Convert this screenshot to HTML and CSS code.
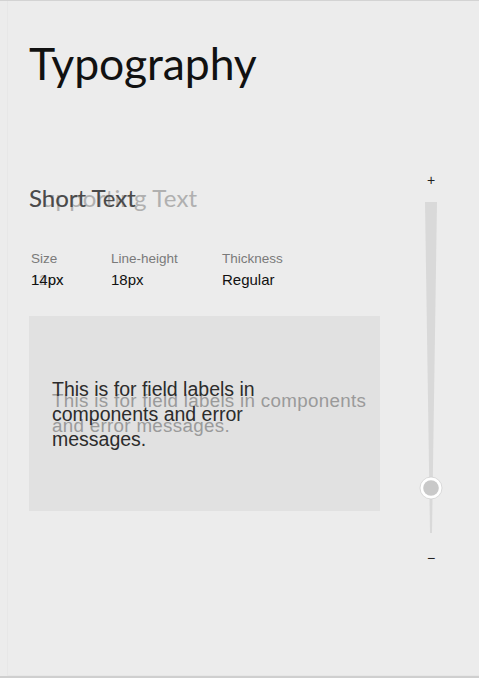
FILE: index.html
```html
<!DOCTYPE html>
<html>
<head>
<meta charset="utf-8">
<link rel="stylesheet" href="styles.css">
</head>
<body>
<div class="page">
  <div class="main">
    <h1 class="title">Typography</h1>
    <div class="stack style-name">
      <span class="name-new">Supporting Text</span>
      <span class="name-old">Short Text</span>
    </div>
    <div class="specs">
      <div class="spec spec-size">
        <div class="spec-label">Size</div>
        <div class="stack">
          <span class="spec-value ghost">12px</span>
          <span class="spec-value">14px</span>
        </div>
      </div>
      <div class="spec spec-lh">
        <div class="spec-label">Line-height</div>
        <div class="spec-value">18px</div>
      </div>
      <div class="spec">
        <div class="spec-label">Thickness</div>
        <div class="spec-value">Regular</div>
      </div>
    </div>
    <div class="sample stack">
      <p class="sample-new">This is for field labels in components and error messages.</p>
      <p class="sample-old">This is for field labels in components and error messages.</p>
    </div>
  </div>
  <div class="slider">
    <span class="slider-sign">+</span>
    <svg class="slider-track" width="30" height="344" viewBox="0 0 30 344">
      <polygon points="9,0 21,0 16,331 14,331" fill="#d9d9d9"/>
      <circle cx="15" cy="286" r="11" fill="#ffffff" stroke="#d0d0d0" stroke-width="0.8"/>
      <circle cx="15" cy="286" r="7.8" fill="#c9c9c9"/>
    </svg>
    <span class="slider-sign minus">&minus;</span>
  </div>
</div>
</body>
</html>
```

FILE: styles.css
```css
html, body {
  margin: 0;
  padding: 0;
}
body {
  background: #ececec;
  width: 479px;
  height: 678px;
  box-sizing: border-box;
  border-top: 1px solid #d3d3d3;
  border-bottom: 2px solid #cfcfcf;
  overflow: hidden;
  font-family: "Liberation Sans", Arial, sans-serif;
}
.page {
  display: flex;
  height: 100%;
  box-sizing: border-box;
  border-left: 1px solid #e7e7e7;
  margin-left: 7px;
  border-bottom: 1px solid #e7e7e7;
  margin-bottom: 3px;
}
.main {
  width: 351px;
  padding: 40px 0 0 21px;
}
.title {
  margin: 0;
  font-family: Lato, "Open Sans", sans-serif;
  font-weight: 400;
  font-size: 44.5px;
  line-height: 44px;
  color: #111;
  letter-spacing: -0.1px;
}
.stack {
  display: grid;
  align-items: center;
}
.stack > * {
  grid-area: 1 / 1;
}
.style-name {
  margin-top: 101px;
  font-family: Lato, "Open Sans", sans-serif;
  font-size: 24px;
  line-height: 24px;
}
.name-old {
  color: #4a4a4a;
  font-weight: 400;
}
.name-new {
  color: #b0b0b0;
  font-weight: 400;
  letter-spacing: 0.2px;
}
.specs {
  display: flex;
  margin-top: 41px;
  padding-left: 2px;
}
.spec-size {
  width: 80px;
}
.spec-lh {
  width: 111px;
}
.spec-label {
  font-size: 13.5px;
  line-height: 16px;
  color: #7a7a7a;
  margin-bottom: 4px;
}
.spec-value {
  font-size: 15px;
  line-height: 18px;
  color: #111;
}
.spec-value.ghost {
  color: #b0b0b0;
}
.sample {
  margin-top: 27px;
  height: 195px;
  background: #e1e1e1;
  padding: 0 8px 0 23px;
}
.sample p {
  margin: 0;
}
.sample-old {
  font-size: 19.5px;
  line-height: 25px;
  color: #2c2c2c;
  width: 236px;
  position: relative;
  top: 1px;
}
.sample-new {
  font-size: 18.8px;
  line-height: 25px;
  letter-spacing: 0.3px;
  color: #9a9a9a;
  width: 330px;
  position: relative;
  top: -1px;
}
.slider {
  display: flex;
  flex-direction: column;
  align-items: center;
  width: 30px;
  margin-left: 36px;
  padding-top: 171px;
}
.slider-sign {
  font-size: 14px;
  line-height: 16px;
  color: #222;
  height: 16px;
}
.slider-track {
  display: block;
  margin-top: 14px;
}
.slider-sign.minus {
  margin-top: 4px;
}
```
